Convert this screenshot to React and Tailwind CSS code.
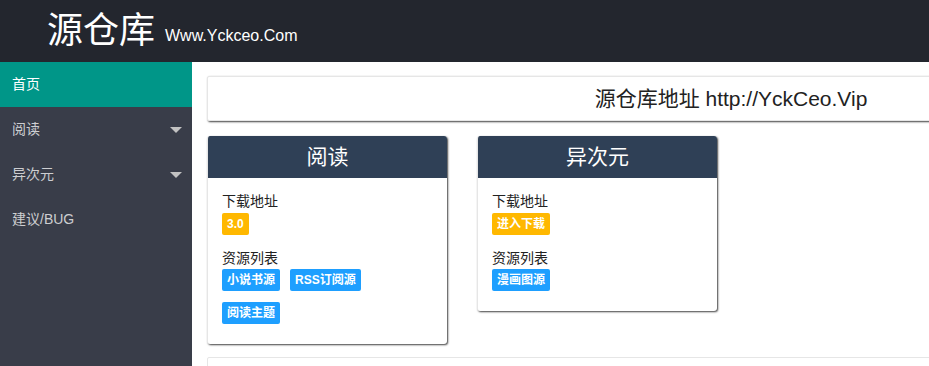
import React from 'react';

const font = { fontFamily: '"Liberation Sans", "Noto Sans CJK SC", sans-serif' };

const navItems = [
  { label: '首页', active: true },
  { label: '阅读', more: true },
  { label: '异次元', more: true },
  { label: '建议/BUG' },
];

const cards = [
  {
    title: '阅读',
    downloads: [{ text: '3.0' }],
    sources: ['小说书源', 'RSS订阅源', '阅读主题'],
  },
  {
    title: '异次元',
    downloads: [{ text: '进入下载' }],
    sources: ['漫画图源'],
  },
];

function Badge({ color, children }) {
  return (
    <span className={`inline-flex items-center h-[22px] px-[5px] rounded-[2px] text-[12px] font-bold text-white ${color}`}>
      {children}
    </span>
  );
}

function SourceCard({ card }) {
  return (
    <div className="w-[240px] bg-white border-l border-[#e6e6e6] rounded-[3px] shadow-[1px_1px_2px_rgba(0,0,0,0.75)] overflow-hidden">
      <div className="h-[42px] bg-[#2f4056] flex items-center justify-center text-white text-[21px]">
        {card.title}
      </div>
      <div className="px-[14px] pt-[12px] pb-[20px] text-[14px] text-[#222]">
        <div className="leading-[22px]">下载地址</div>
        <div className="mt-px flex gap-[10px]">
          {card.downloads.map((d) => (
            <Badge key={d.text} color="bg-[#ffb800]">{d.text}</Badge>
          ))}
        </div>
        <div className="mt-[12px] leading-[22px]">资源列表</div>
        <div className="w-[200px] flex flex-wrap gap-x-[10px] gap-y-[11px]">
          {card.sources.map((s) => (
            <Badge key={s} color="bg-[#1e9fff]">{s}</Badge>
          ))}
        </div>
      </div>
    </div>
  );
}

export default function App() {
  return (
    <div className="h-[366px] w-[929px] flex flex-col overflow-hidden bg-white" style={font}>
      <header className="h-[62px] shrink-0 bg-[#23262e] flex items-end pb-[9px] pl-[47px] text-white">
        <span className="text-[36px] leading-[44px]">源仓库</span>
        <span className="ml-[10px] mb-[8px] text-[16px] leading-[18px]">Www.Yckceo.Com</span>
      </header>
      <div className="flex flex-1 min-h-0">
        <aside className="w-[192px] shrink-0 bg-[#393d49]">
          {navItems.map((item) => (
            <div
              key={item.label}
              className={`h-[45px] flex items-center justify-between pl-[12px] pr-[10px] text-[14px] ${
                item.active ? 'bg-[#009688] text-white' : 'text-white/75'
              }`}
            >
              <span>{item.label}</span>
              {item.more && (
                <span className="w-0 h-0 border-x-[6px] border-x-transparent border-t-[6px] border-t-[#c2c2c2]" />
              )}
            </div>
          ))}
        </aside>
        <main className="flex-1 min-w-0 overflow-hidden pl-[15px] pt-[14px]">
          <div className="w-[1048px] h-[45px] bg-white border border-[#e6e6e6] rounded-[2px] shadow-[1px_1px_2px_rgba(0,0,0,0.75)] flex items-center justify-center text-[21px] text-[#222]">
            源仓库地址 http://YckCeo.Vip
          </div>
          <div className="mt-[15px] flex items-start gap-[30px]">
            {cards.map((c) => (
              <SourceCard key={c.title} card={c} />
            ))}
          </div>
          <div className="mt-[13px] w-[1048px] h-[40px] bg-white border border-[#e6e6e6] rounded-[2px]" />
        </main>
      </div>
    </div>
  );
}
